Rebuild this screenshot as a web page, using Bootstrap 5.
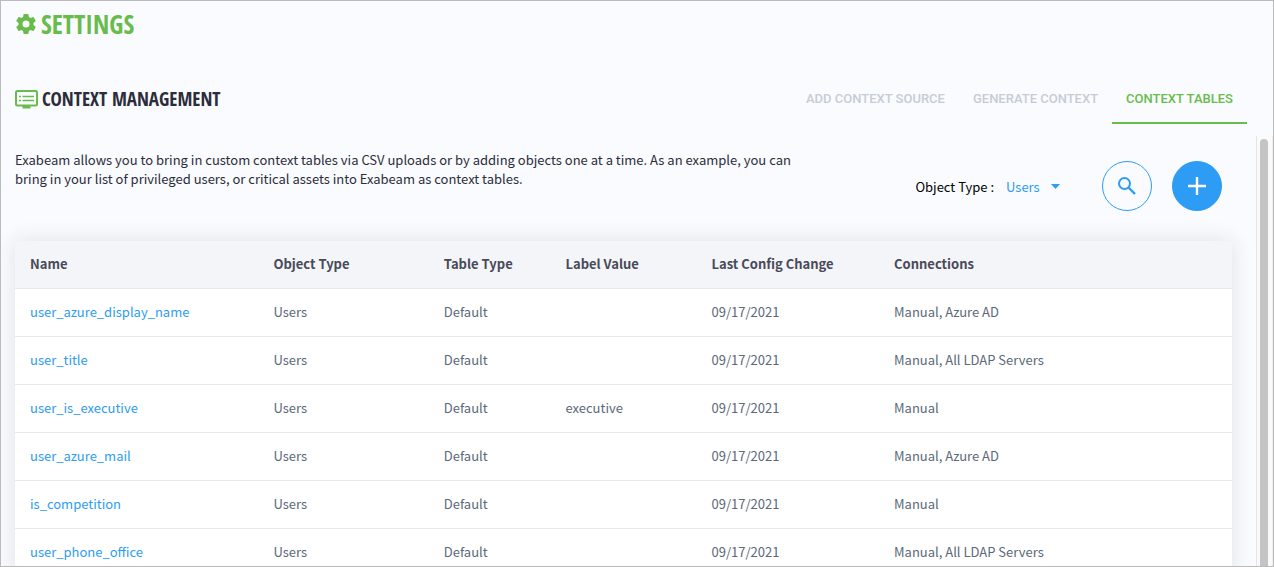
<!DOCTYPE html>
<html lang="en">
<head>
<meta charset="utf-8">
<meta name="viewport" content="width=device-width, initial-scale=1">
<title>Settings - Context Management</title>
<link href="https://cdn.jsdelivr.net/npm/bootstrap@5.3.0/dist/css/bootstrap.min.css" rel="stylesheet">
<style>
  :root { --ex-green: #67bc4b; --ex-blue: #2d9cf4; --ex-ink: #2b2d3a; --ex-page: #fafbfe; }
  body { font-family: "Noto Sans CJK SC", sans-serif; font-size: 13px; line-height: 19px; color: var(--ex-ink); background: var(--ex-page); }
  .app-frame { height: 100vh; border: 1px solid #bbb; }
  .display-text { padding-left: 14px; font-family: "Noto Sans ExtraCondensed", "Noto Sans Extra Condensed", "Open Sans Condensed", sans-serif; font-weight: 700; }
  .settings-title { font-size: 26px; line-height: 30px; color: var(--ex-green); }
  .page-title { font-size: 19px; line-height: 30px; }
  .page-header { padding-top: 35px; }
  .section-tabs { padding-right: 26px; font-family: Roboto, sans-serif; font-size: 13px; font-weight: 500; }
  .section-tabs .nav-link { padding: 15px 14px 14px; line-height: 19px; color: #c6ccd6; border-bottom: 2px solid transparent; border-radius: 0; }
  .section-tabs .nav-link.active { color: var(--ex-green); border-color: var(--ex-green); }
  .scroll-pane { padding: 14px 24px 0 14px; }
  .intro { max-width: 800px; }
  .controls { padding: 11px 10px 0 0; }
  .type-label { color: #000; }
  .type-select { width: 54px; height: 24px; margin-right: 42px; padding: 0; font-size: 13px; line-height: 19px; color: var(--ex-blue); border: 0; background: transparent url("data:image/svg+xml,%3Csvg xmlns='http://www.w3.org/2000/svg' viewBox='0 0 18 10'%3E%3Cpath fill='%232d9cf4' d='M0 0h18L9 10z'/%3E%3C/svg%3E") no-repeat right center / 9px 5px; }
  .round-btn { width: 50px; height: 50px; --bs-btn-color: var(--ex-blue); --bs-btn-border-color: var(--ex-blue); --bs-btn-hover-color: var(--ex-blue); }
  .round-btn.filled { margin-left: 20px; --bs-btn-color: #fff; --bs-btn-bg: var(--ex-blue); --bs-btn-hover-bg: #1d8be2; --bs-btn-hover-color: #fff; }
  .table-panel { margin-top: 30px; background: #fff; box-shadow: 0 0 20px rgba(40, 45, 60, .12); }
  .context-table { table-layout: fixed; --bs-table-bg: #fff; --bs-table-color: #5b6879; }
  .context-table th, .context-table td { height: 48px; padding: 0 15px 2px; border-bottom: 1px solid #e6e9ef; vertical-align: middle; }
  .context-table th { height: 47px; background: #f4f5f8; color: #484a58; font-weight: 700; }
  .context-table a { color: var(--ex-blue); text-decoration: none; }
  .scroll-track { width: 17px; padding: 3px 4px 0 3px; background: #fafafa; border-left: 1px solid #e4e4e4; border-right: 1px solid #eee; }
  .scroll-thumb { width: 8px; height: 100%; background: #c4c4c4; border-radius: 4px 4px 0 0; }
</style>
</head>
<body>
<div class="app-frame d-flex flex-column overflow-hidden">
  <header>
    <h1 class="settings-title display-text d-flex align-items-center gap-1 m-0 pt-2">
      <svg width="22" height="20" viewBox="1 2 22 20" fill="currentColor" aria-hidden="true"><path d="M19.430 12.980c.04-.32.07-.64.07-.98s-.03-.66-.07-.98l2.110-1.650c.19-.15.24-.42.12-.64l-2-3.460c-.12-.22-.39-.3-.61-.22l-2.490 1c-.52-.4-1.080-.73-1.690-.98l-.38-2.650A.488.488 0 0 0 14 2h-4c-.25 0-.46.18-.49.42l-.38 2.650c-.61.25-1.170.59-1.690.98l-2.490-1c-.23-.09-.49 0-.61.22l-2 3.460c-.13.22-.07.49.12.64l2.110 1.650c-.04.32-.07.65-.07.98s.03.66.07.98l-2.110 1.650c-.19.15-.24.42-.12.64l2 3.460c.12.22.39.3.61.22l2.490-1c.52.4 1.080.73 1.690.98l.38 2.650c.03.24.24.42.49.42h4c.25 0 .46-.18.49-.42l.38-2.650c.61-.25 1.170-.59 1.690-.98l2.490 1c.23.09.49 0 .61-.22l2-3.460c.12-.22.07-.49-.12-.64zM12 15.500a3.500 3.500 0 1 1 0-7 3.500 3.500 0 0 1 0 7z"/></svg>
      SETTINGS
    </h1>
    <div class="page-header d-flex justify-content-between">
      <h2 class="page-title display-text d-flex align-items-center gap-1 m-0">
        <svg width="23" height="19" viewBox="0 0 23 19" fill="none" stroke="#67bc4b" aria-hidden="true"><rect x="1" y="1" width="21" height="14.500" rx="1.500" stroke-width="2"/><path d="M7.500 17h8" stroke-width="3"/><path d="M4 6.500h2M4 10.500h2M7.500 6.500h11.500M7.500 10.500h11.500" stroke-width="1.600"/></svg>
        CONTEXT MANAGEMENT
      </h2>
      <nav aria-label="Context sections">
        <ul class="nav section-tabs">
          <li class="nav-item"><a class="nav-link" href="#">ADD CONTEXT SOURCE</a></li>
          <li class="nav-item"><a class="nav-link" href="#">GENERATE CONTEXT</a></li>
          <li class="nav-item"><a class="nav-link active" aria-current="page" href="#">CONTEXT TABLES</a></li>
        </ul>
      </nav>
    </div>
  </header>
  <div class="d-flex flex-fill overflow-hidden mt-2 pt-1">
    <main class="scroll-pane flex-fill">
      <div class="d-flex justify-content-between">
        <p class="intro m-0">Exabeam allows you to bring in custom context tables via CSV uploads or by adding objects one at a time. As an example, you can bring in your list of privileged users, or critical assets into Exabeam as context tables.</p>
        <div class="controls d-flex align-items-center flex-shrink-0">
          <label class="type-label me-2 pe-1" for="objectType">Object Type :</label>
          <select class="form-select type-select" id="objectType"><option>Users</option><option>Assets</option></select>
          <button class="btn round-btn rounded-circle p-0 d-flex align-items-center justify-content-center" type="button" aria-label="Search">
            <svg width="18" height="18" viewBox="0 0 18 18" fill="none" stroke="currentColor" stroke-width="2" aria-hidden="true"><circle cx="6.500" cy="6.500" r="5.500"/><path d="M10.500 10.500l6.500 6.500" stroke-width="2.400"/></svg>
          </button>
          <button class="btn round-btn filled rounded-circle p-0 d-flex align-items-center justify-content-center" type="button" aria-label="Add table">
            <svg width="18" height="18" viewBox="0 0 18 18" stroke="currentColor" stroke-width="2.400" aria-hidden="true"><path d="M9 0v18M0 9h18"/></svg>
          </button>
        </div>
      </div>
      <div class="table-panel">
        <table class="table context-table m-0">
          <colgroup><col style="width:20%"><col style="width:14%"><col style="width:10%"><col style="width:12%"><col style="width:15%"><col style="width:29%"></colgroup>
          <thead><tr><th scope="col">Name</th><th scope="col">Object Type</th><th scope="col">Table Type</th><th scope="col">Label Value</th><th scope="col">Last Config Change</th><th scope="col">Connections</th></tr></thead>
          <tbody>
            <tr><td><a href="#">user_azure_display_name</a></td><td>Users</td><td>Default</td><td></td><td>09/17/2021</td><td>Manual, Azure AD</td></tr>
            <tr><td><a href="#">user_title</a></td><td>Users</td><td>Default</td><td></td><td>09/17/2021</td><td>Manual, All LDAP Servers</td></tr>
            <tr><td><a href="#">user_is_executive</a></td><td>Users</td><td>Default</td><td>executive</td><td>09/17/2021</td><td>Manual</td></tr>
            <tr><td><a href="#">user_azure_mail</a></td><td>Users</td><td>Default</td><td></td><td>09/17/2021</td><td>Manual, Azure AD</td></tr>
            <tr><td><a href="#">is_competition</a></td><td>Users</td><td>Default</td><td></td><td>09/17/2021</td><td>Manual</td></tr>
            <tr><td><a href="#">user_phone_office</a></td><td>Users</td><td>Default</td><td></td><td>09/17/2021</td><td>Manual, All LDAP Servers</td></tr>
          </tbody>
        </table>
      </div>
    </main>
    <div class="scroll-track flex-shrink-0" aria-hidden="true"><div class="scroll-thumb"></div></div>
  </div>
</div>
<script src="https://cdn.jsdelivr.net/npm/bootstrap@5.3.0/dist/js/bootstrap.bundle.min.js"></script>
</body>
</html>
